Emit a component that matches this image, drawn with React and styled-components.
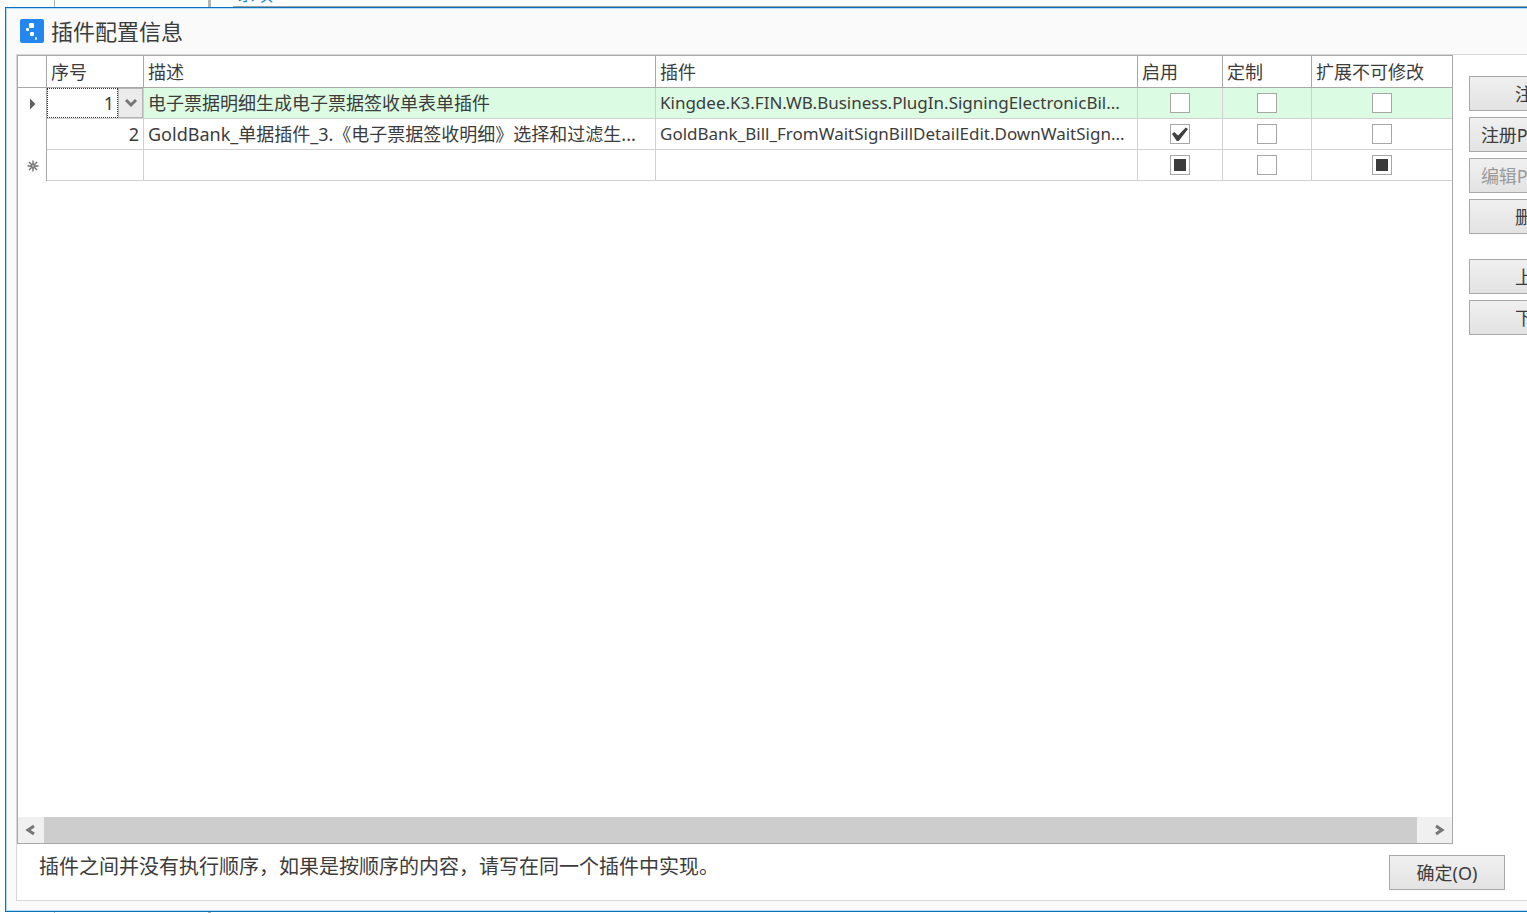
import React from "react";
import styled, { createGlobalStyle } from "styled-components";

const GlobalStyle = createGlobalStyle`
  * {
    box-sizing: border-box;
  }

  body {
    margin: 0;
    overflow: hidden;
    background: #fff;
    color: #3c3c3c;
    font-family: "Noto Sans", "Noto Sans CJK SC", sans-serif;
    font-size: 18px;
    line-height: 24px;
  }

  button,
  input {
    font: inherit;
    color: inherit;
  }
`;

const Page = styled.div`
  display: flex;
  flex-direction: column;
  height: 100vh;
  overflow: hidden;
`;

const Backdrop = styled.div`
  display: grid;
  grid-template-columns: 55px 156px 22px 1fr;
  flex: none;
  height: ${(props) => props.$height}px;
  overflow: hidden;

  .line {
    border-right: 1px solid #b4b4b4;
  }

  .divider {
    border-right: 3px solid #b4b4b4;
  }
`;

const BackdropTab = styled.div`
  display: flex;
  align-items: flex-end;
  height: 7px;
  padding-left: 4px;
  border-bottom: 1px solid #a0a0a0;
  color: #1883d7;
`;

const Dialog = styled.main`
  display: flex;
  flex-direction: column;
  flex: 1;
  min-height: 0;
  margin: 0 -90px 0 5px;
  padding: 0 10px 10px;
  border: 1px solid #0a72bd;
  background: #fafafa;
  box-shadow: inset 0 0 0 1px #b5dcf5;
`;

const TitleBar = styled.header`
  display: flex;
  align-items: center;
  gap: 7px;
  flex: none;
  height: 46px;
  padding-left: 4px;

  h1 {
    margin: 0;
    font-size: 22px;
    font-weight: 400;
    line-height: 30px;
  }
`;

const Body = styled.section`
  display: flex;
  flex-direction: column;
  flex: 1;
  min-height: 0;
  border: 1px solid #d8d8d8;
  background: #fff;
`;

const Content = styled.div`
  display: flex;
  flex: 1;
  gap: 16px;
  min-height: 0;
  padding-right: 8px;
`;

const GridPanel = styled.div`
  display: flex;
  flex-direction: column;
  justify-content: space-between;
  flex: 1;
  min-width: 0;
  border: 1px solid #a8a8a8;
`;

const Table = styled.table`
  width: 100%;
  table-layout: fixed;
  border-collapse: separate;
  border-spacing: 0;

  th,
  td {
    height: 31px;
    padding: 0 4px;
    overflow: hidden;
    border-right: 1px solid #d0d0d0;
    border-bottom: 1px solid #d0d0d0;
    font-weight: 400;
    text-align: left;
    text-overflow: ellipsis;
    white-space: nowrap;
  }

  thead th {
    height: 32px;
    border-color: #a8a8a8;
  }

  tbody th {
    padding: 0 0 0 2px;
    border-right-color: #a8a8a8;
    border-bottom: 0;
  }

  tr > :last-child {
    border-right: 0;
  }
`;

const Row = styled.tr`
  td {
    background: ${(props) => (props.$selected ? "#dcfbe3" : "#fff")};
  }

  td.number {
    text-align: right;
  }

  td.plugin {
    font-size: 17px;
  }

  td.editing {
    padding: 0;
  }

  td.check {
    padding: 0;
  }

  svg {
    display: block;
    margin: 0 auto;
  }
`;

const Editor = styled.div`
  display: flex;
  height: 30px;
  background: #fff;

  input {
    flex: 1;
    min-width: 0;
    padding: 0 3px;
    border: 1px dotted #303030;
    outline: 0;
    background: #fff;
    text-align: right;
  }

  button {
    display: grid;
    place-items: center;
    width: 25px;
    padding: 0;
    border: 1px solid #b4b4b4;
    background: #ebebeb;
  }
`;

const CheckBox = styled.input`
  appearance: none;
  display: grid;
  place-items: center;
  width: 20px;
  height: 20px;
  margin: 0 auto;
  border: 1px solid #a6a6a6;
  background: #fff;

  &:checked::before {
    content: "";
    width: 16px;
    height: 14px;
    background: #404040;
    clip-path: polygon(0 50%, 14% 36%, 38% 60%, 86% 4%, 100% 14%, 42% 100%, 30% 100%);
  }

  &:indeterminate::before {
    content: "";
    width: 12px;
    height: 12px;
    background: #3a3a3a;
  }
`;

const ScrollBar = styled.div`
  display: flex;
  flex: none;
  height: 26px;
  background: #cdcdcd;

  button {
    display: grid;
    place-items: center;
    width: 26px;
    padding: 0;
    border: 0;
    background: #f0f0f0;
  }

  button:last-child {
    width: 35px;
    margin-left: auto;
    padding-left: 9px;
  }
`;

const Actions = styled.div`
  display: flex;
  flex-direction: column;
  gap: 6px;
  flex: none;
  width: 128px;
  padding-top: 21px;
`;

const Button = styled.button`
  flex: none;
  width: ${(props) => props.$width || "100%"};
  height: 35px;
  margin-top: ${(props) => (props.$gap ? props.$gap : 0)}px;
  padding: 0;
  border: 1px solid #a8a8a8;
  background: linear-gradient(#f0f0f0, #e3e3e3);
  white-space: nowrap;

  &:disabled {
    color: #9a9a9a;
  }
`;

const Footer = styled.footer`
  display: flex;
  justify-content: space-between;
  flex: none;
  height: 56px;
  padding: 11px 100px 0 22px;

  p {
    margin: 0;
    font-size: 20px;
  }
`;

const columns = [
  { label: "序号", width: "97px" },
  { label: "描述", width: "512px" },
  { label: "插件", width: "482px" },
  { label: "启用", width: "85px" },
  { label: "定制", width: "89px" },
  { label: "扩展不可修改" },
];

const rows = [
  {
    id: 1,
    name: "电子票据明细生成电子票据签收单表单插件",
    plugin: "Kingdee.K3.FIN.WB.Business.PlugIn.SigningElectronicBil...",
    flags: [false, false, false],
    selected: true,
  },
  {
    id: 2,
    name: "GoldBank_单据插件_3.《电子票据签收明细》选择和过滤生...",
    plugin: "GoldBank_Bill_FromWaitSignBillDetailEdit.DownWaitSign...",
    flags: [true, false, false],
  },
  { id: "", name: "", plugin: "", flags: [null, false, null], blank: true },
];

const Logo = () => (
  <svg width="24" height="24" viewBox="0 0 24 24" aria-hidden="true">
    <rect width="24" height="24" rx="2" fill="#2486ef" />
    <g fill="#fff">
      <rect x="9" y="4" width="5" height="5" rx="1" />
      <rect x="6" y="9" width="3" height="3" rx="1" />
      <rect x="10" y="13" width="4" height="4" rx="1" />
      <rect x="15" y="18" width="2" height="3" rx="1" opacity="0.85" />
    </g>
  </svg>
);

const Chevron = ({ points, width = 12, height = 12 }) => (
  <svg width={width} height={height} viewBox={`0 0 ${width} ${height}`} aria-hidden="true">
    <polyline points={points} fill="none" stroke="#767676" strokeWidth="3" />
  </svg>
);

const RowMark = ({ row }) => {
  if (row.selected) {
    return (
      <svg width="6" height="12" viewBox="0 0 6 12">
        <path d="M0 0.5L5.5 6L0 11.5Z" fill="#606060" />
      </svg>
    );
  }
  if (row.blank) {
    return (
      <svg width="12" height="12" viewBox="0 0 12 12">
        <path
          d="M6 0.5V11.5M0.5 6H11.5M2 2L10 10M10 2L2 10"
          stroke="#707070"
          strokeWidth="1.4"
        />
        <circle cx="6" cy="6" r="2" fill="#b0b0b0" stroke="#707070" />
      </svg>
    );
  }
  return null;
};

const Flag = ({ label, value }) => (
  <CheckBox
    type="checkbox"
    aria-label={label}
    defaultChecked={value === true}
    ref={(el) => {
      if (el) el.indeterminate = value === null;
    }}
  />
);

const PluginTable = () => (
  <Table>
    <colgroup>
      <col style={{ width: "29px" }} />
      {columns.map((col) => (
        <col key={col.label} style={{ width: col.width }} />
      ))}
    </colgroup>
    <thead>
      <tr>
        <th />
        {columns.map((col) => (
          <th key={col.label} scope="col">
            {col.label}
          </th>
        ))}
      </tr>
    </thead>
    <tbody>
      {rows.map((row, i) => (
        <Row key={i} $selected={row.selected}>
          <th scope="row">
            <RowMark row={row} />
          </th>
          {row.selected ? (
            <td className="editing">
              <Editor>
                <input aria-label="序号" defaultValue={row.id} />
                <button type="button" aria-label="选择序号">
                  <Chevron points="1,2 6,7 11,2" height={10} />
                </button>
              </Editor>
            </td>
          ) : (
            <td className="number">{row.id}</td>
          )}
          <td>{row.name}</td>
          <td className="plugin">{row.plugin}</td>
          {row.flags.map((flag, n) => (
            <td className="check" key={n}>
              <Flag label={columns[n + 3].label} value={flag} />
            </td>
          ))}
        </Row>
      ))}
    </tbody>
  </Table>
);

const App = () => {
  return (
    <Page>
      <GlobalStyle />
      <Backdrop $height={7}>
        <div className="line" />
        <div className="divider" />
        <div />
        <BackdropTab>系项</BackdropTab>
      </Backdrop>
      <Dialog>
        <TitleBar>
          <Logo />
          <h1>插件配置信息</h1>
        </TitleBar>
        <Body>
          <Content>
            <GridPanel>
              <PluginTable />
              <ScrollBar>
                <button type="button" aria-label="向左滚动">
                  <Chevron points="9,2 3,6 9,10" />
                </button>
                <button type="button" aria-label="向右滚动">
                  <Chevron points="3,2 9,6 3,10" />
                </button>
              </ScrollBar>
            </GridPanel>
            <Actions>
              <Button type="button">注册</Button>
              <Button type="button">注册PyScript</Button>
              <Button type="button" disabled>
                编辑PyScript
              </Button>
              <Button type="button">删除</Button>
              <Button type="button" $gap={19}>
                上移
              </Button>
              <Button type="button">下移</Button>
            </Actions>
          </Content>
          <Footer>
            <p>插件之间并没有执行顺序，如果是按顺序的内容，请写在同一个插件中实现。</p>
            <Button type="button" $width="116px">
              确定(O)
            </Button>
          </Footer>
        </Body>
      </Dialog>
      <Backdrop $height={1}>
        <div className="line" />
        <div className="divider" />
      </Backdrop>
    </Page>
  );
};

export default App;
